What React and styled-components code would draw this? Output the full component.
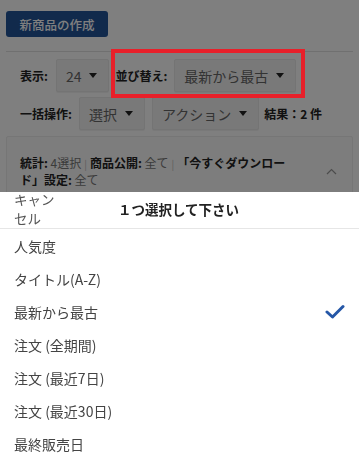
import React from "react";
import styled, { createGlobalStyle } from "styled-components";

const Global = createGlobalStyle`
  html, body { margin: 0; padding: 0; background: #fff; }
  body { font-family: "Noto Sans CJK JP", "Noto Sans", sans-serif; color: #333; }
  * { box-sizing: border-box; }
`;

const Page = styled.div`
  padding: 11px 6px 0;
`;

const TopBar = styled.div`
  display: flex;
  align-items: center;
`;

const PrimaryButton = styled.div`
  flex: 0 0 102px;
  width: 102px;
  height: 26px;
  padding: 0 14px;
  border-radius: 3px;
  background: #225498;
  color: #fff;
  font-size: 12.5px;
  font-weight: 500;
  display: flex;
  align-items: center;
  justify-content: center;
  white-space: nowrap;
`;

const Divider = styled.hr`
  margin: 14px 0 0;
  border: none;
  border-top: 1px solid #e0e0e0;
`;

const Toolbar = styled.div`
  display: flex;
  flex-direction: column;
  gap: 5px;
  padding-left: 14px;
  margin-top: 7px;
`;

const Row = styled.div`
  display: flex;
  align-items: center;
  height: 33px;
`;

const Label = styled.span`
  font-size: 12px;
  font-weight: 700;
  color: #222;
  margin-right: ${(p) => p.$mr ?? 7}px;
  white-space: nowrap;
`;

const Select = styled.div`
  display: flex;
  align-items: center;
  gap: 8px;
  height: 33px;
  padding: 0 11px 0 9px;
  margin-right: ${(p) => p.$mr ?? 6}px;
  background: #f3f3f3;
  border: 1px solid #e8e8e8;
  border-radius: 2px;
  box-shadow: 0 1px 1px rgba(0, 0, 0, 0.06);
  font-size: 14px;
  color: #666;
  white-space: nowrap;
`;

const Caret = styled.span`
  width: 0;
  height: 0;
  border-left: 4.5px solid transparent;
  border-right: 4.5px solid transparent;
  border-top: 5px solid #222;
`;

const Highlight = styled.div`
  display: flex;
  align-items: center;
  position: relative;
  &::after {
    content: "";
    position: absolute;
    left: -4px;
    right: -9px;
    top: -10px;
    bottom: -6px;
    border: 4px solid #e8202a;
    z-index: 20;
    pointer-events: none;
  }
`;

const Stats = styled.div`
  margin-top: 6px;
  background: #fafafa;
  border: 1px solid #ececec;
  border-radius: 2px;
  display: flex;
  align-items: center;
  padding: 16px 15px 16px 13px;
  min-height: 70px;
`;

const StatsText = styled.div`
  flex: 1;
  max-width: 275px;
  font-size: 12px;
  line-height: 16px;
  color: #777;
`;

const B = styled.b`
  font-weight: 700;
  color: #222;
`;

const Sep = styled.span`
  color: #bbb;
  font-size: 10px;
  margin: 0 3px;
`;

const Chevron = styled.svg`
  margin-left: auto;
  flex: none;
`;

const Overlay = styled.div`
  position: fixed;
  inset: 0;
  background: rgba(0, 0, 0, 0.5);
  z-index: 10;
`;

const Sheet = styled.div`
  position: fixed;
  left: 0;
  right: 0;
  bottom: 0;
  background: #fff;
  z-index: 30;
`;

const SheetHeader = styled.div`
  height: 37px;
  border-bottom: 1px solid #e6e6e6;
  display: grid;
  grid-template-columns: 70px 1fr 72px;
  align-items: center;
  overflow: visible;
`;

const Cancel = styled.span`
  width: 44px;
  margin-left: 14px;
  margin-top: -3px;
  font-size: 13.5px;
  line-height: 19px;
  color: #555;
`;

const Title = styled.span`
  text-align: center;
  font-size: 13.5px;
  font-weight: 700;
  color: #222;
  margin-top: -2px;
`;

const Option = styled.div`
  height: 33px;
  display: flex;
  align-items: center;
  justify-content: space-between;
  padding: 0 14px;
  font-size: 14px;
  color: #444;
`;

const options = [
  "人気度",
  "タイトル(A-Z)",
  "最新から最古",
  "注文 (全期間)",
  "注文 (最近7日)",
  "注文 (最近30日)",
  "最終販売日",
];

export default function App() {
  return (
    <>
      <Global />
      <Page>
        <TopBar>
          <PrimaryButton>新商品の作成</PrimaryButton>
        </TopBar>
        <Divider />
        <Toolbar>
          <Row>
            <Label $mr={8}>表示:</Label>
            <Select>
              24 <Caret />
            </Select>
            <Highlight>
              <Label>並び替え:</Label>
              <Select $mr={0}>
                最新から最古 <Caret />
              </Select>
            </Highlight>
          </Row>
          <Row>
            <Label>一括操作:</Label>
            <Select $mr={7}>
              選択 <Caret />
            </Select>
            <Select $mr={5}>
              アクション <Caret />
            </Select>
            <Label>結果：2 件</Label>
          </Row>
        </Toolbar>
        <Stats>
          <StatsText>
            <B>統計:</B> 4選択<Sep>|</Sep>
            <B>商品公開:</B> 全て<Sep>|</Sep>
            <B>
              「今すぐダウンロー
              <br />
              ド」設定:
            </B>{" "}
            全て
          </StatsText>
          <Chevron width="11" height="7" viewBox="0 0 11 7">
            <polyline
              points="1,6 5.5,1.5 10,6"
              fill="none"
              stroke="#999"
              strokeWidth="1.2"
            />
          </Chevron>
        </Stats>
      </Page>
      <Overlay />
      <Sheet>
        <SheetHeader>
          <Cancel>キャンセル</Cancel>
          <Title>１つ選択して下さい</Title>
          <span />
        </SheetHeader>
        {options.map((o) => (
          <Option key={o}>
            <span>{o}</span>
            {o === "最新から最古" && (
              <svg width="20" height="16" viewBox="0 0 20 16">
                <polyline
                  points="2,8 7.5,13 18,2.5"
                  fill="none"
                  stroke="#2557a7"
                  strokeWidth="3"
                  strokeLinecap="round"
                  strokeLinejoin="round"
                />
              </svg>
            )}
          </Option>
        ))}
      </Sheet>
    </>
  );
}
